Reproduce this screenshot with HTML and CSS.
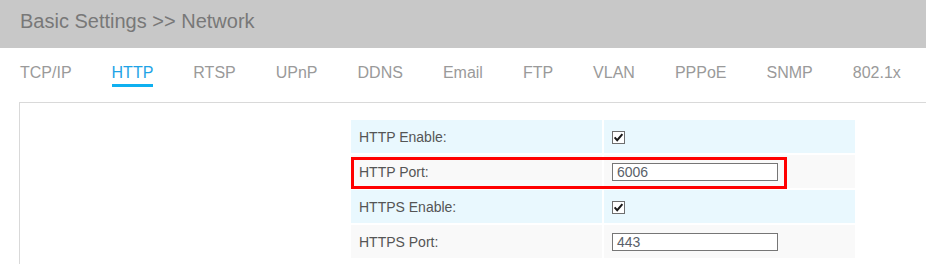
FILE: index.html
```html
<!DOCTYPE html>
<html>
<head>
<meta charset="utf-8">
<link rel="stylesheet" href="styles.css">
</head>
<body>
<header class="title-bar">Basic Settings &gt;&gt; Network</header>
<nav class="tabs">
  <span class="tab">TCP/IP</span>
  <span class="tab active">HTTP</span>
  <span class="tab">RTSP</span>
  <span class="tab">UPnP</span>
  <span class="tab">DDNS</span>
  <span class="tab">Email</span>
  <span class="tab">FTP</span>
  <span class="tab">VLAN</span>
  <span class="tab">PPPoE</span>
  <span class="tab">SNMP</span>
  <span class="tab">802.1x</span>
</nav>
<section class="panel">
  <div class="form-wrap">
    <table class="form">
      <tr class="row-a">
        <td class="label">HTTP Enable:</td>
        <td class="value"><span class="check"><svg width="13" height="13" viewBox="0 0 13 13"><rect x="0.5" y="0.5" width="12" height="12" fill="#fff" stroke="#6e6e6e"/><path d="M2.6 6.4 L5.2 9.2 L10.4 3.2" fill="none" stroke="#1a1a1a" stroke-width="2"/></svg></span></td>
      </tr>
      <tr class="row-b">
        <td class="label">HTTP Port:</td>
        <td class="value"><span class="field">6006</span></td>
      </tr>
      <tr class="row-a">
        <td class="label">HTTPS Enable:</td>
        <td class="value"><span class="check"><svg width="13" height="13" viewBox="0 0 13 13"><rect x="0.5" y="0.5" width="12" height="12" fill="#fff" stroke="#6e6e6e"/><path d="M2.6 6.4 L5.2 9.2 L10.4 3.2" fill="none" stroke="#1a1a1a" stroke-width="2"/></svg></span></td>
      </tr>
      <tr class="row-b">
        <td class="label">HTTPS Port:</td>
        <td class="value"><span class="field">443</span></td>
      </tr>
    </table>
    <div class="highlight"></div>
  </div>
</section>
</body>
</html>
```

FILE: styles.css
```css
html, body {
  margin: 0;
  padding: 0;
  background: #fff;
  font-family: "Liberation Sans", Arial, sans-serif;
  overflow: hidden;
}

.title-bar {
  height: 48px;
  box-sizing: border-box;
  background: #c8c8c8;
  color: #787878;
  font-size: 20px;
  line-height: 23px;
  padding: 10px 0 0 20px;
}

.tabs {
  display: flex;
  gap: 40px;
  padding: 16px 0 0 20px;
  height: 54px;
  box-sizing: border-box;
}

.tab {
  font-size: 16px;
  line-height: 18px;
  height: 23px;
  color: #9a9a9a;
  white-space: nowrap;
  box-sizing: border-box;
}

.tab.active {
  color: #1ea3e6;
  border-bottom: 3px solid #0fb0f0;
}

.panel {
  margin-left: 19px;
  border-top: 1px solid #d9d9d9;
  border-left: 1px solid #d9d9d9;
  padding-top: 15px;
  height: 146px;
}

.form-wrap {
  position: relative;
  margin-left: 329px;
  width: 508px;
}

.form {
  border-collapse: separate;
  border-spacing: 2px;
}

.form td {
  width: 251px;
  height: 33px;
  padding: 0 0 0 8px;
  box-sizing: border-box;
  font-size: 14px;
  color: #555;
  vertical-align: middle;
}

.row-a td {
  background: #e9f8fe;
}

.row-b td {
  background: #f9f9f9;
}

.check {
  display: flex;
  width: 13px;
  height: 13px;
  margin-top: 1px;
}

.field {
  display: block;
  width: 166px;
  height: 18px;
  box-sizing: border-box;
  border: 1px solid #767676;
  background: #fff;
  font-size: 14px;
  line-height: 16px;
  padding-left: 4px;
  color: #5a5f6a;
}

.highlight {
  position: absolute;
  left: 2px;
  top: 39px;
  width: 436px;
  height: 32px;
  box-sizing: border-box;
  border: 3px solid #ff0000;
}
```
